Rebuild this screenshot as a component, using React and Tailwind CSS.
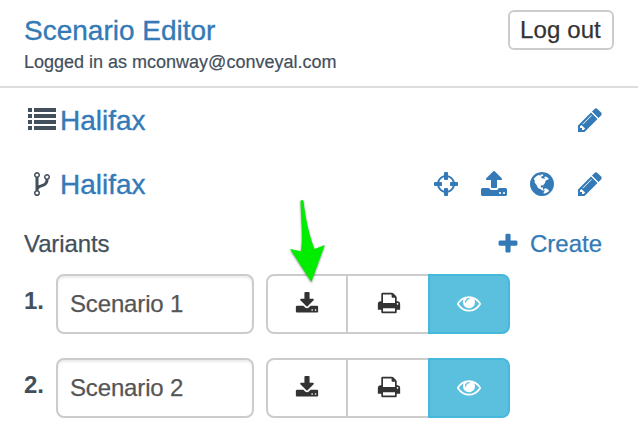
const paths = {
  list: 'M0 128h256v256H0zM384 128h1408v256H384zM0 512h256v256H0zM384 512h1408v256H384zM0 896h256v256H0zM384 896h1408v256H384zM0 1280h256v256H0zM384 1280h1408v256H384z',
  pencil: 'M491 1536l91-91-235-235-91 91v107h128v128h107zm523-928q0-22-22-22-10 0-17 7l-542 542q-7 7-7 17 0 22 22 22 10 0 17-7l542-542q7-7 7-17zm-54-192l416 416-832 832h-416v-416zm683 96q0 53-37 90l-166 166-416-416 166-165q36-38 90-38 53 0 91 38l235 234q37 39 37 91z',
  fork: 'M672 1472q0-40-28-68t-68-28-68 28-28 68 28 68 68 28 68-28 28-68zm0-1152q0-40-28-68t-68-28-68 28-28 68 28 68 68 28 68-28 28-68zm640 128q0-40-28-68t-68-28-68 28-28 68 28 68 68 28 68-28 28-68zm96 0q0 52-26 96.5t-70 69.5q-2 287-226 414-67 38-203 81-128 40-169.5 71t-41.5 100v26q44 25 70 69.5t26 96.5q0 80-56 136t-136 56-136-56-56-136q0-52 26-96.5t70-69.5v-820q-44-25-70-69.5t-26-96.5q0-80 56-136t136-56 136 56 56 136q0 52-26 96.5t-70 69.5v497q54-26 154-57 55-17 87.5-29.5t70.5-31 59-39.5 40.5-51 28-69.5 8.5-91.5q-44-25-70-69.5t-26-96.5q0-80 56-136t136-56 136 56 56 136z',
  crosshairs: 'M1325 1024h-109q-26 0-45-19t-19-45v-128q0-26 19-45t45-19h109q-32-108-112.5-188.5t-188.5-112.5v109q0 26-19 45t-45 19h-128q-26 0-45-19t-19-45v-109q-108 32-188.5 112.5t-112.5 188.5h109q26 0 45 19t19 45v128q0 26-19 45t-45 19h-109q32 108 112.5 188.5t188.5 112.5v-109q0-26 19-45t45-19h128q26 0 45 19t19 45v109q108-32 188.5-112.5t112.5-188.5zm339-192v128q0 26-19 45t-45 19h-143q-37 161-154.5 278.5t-278.5 154.5v143q0 26-19 45t-45 19h-128q-26 0-45-19t-19-45v-143q-161-37-278.5-154.5t-154.5-278.5h-143q-26 0-45-19t-19-45v-128q0-26 19-45t45-19h143q37-161 154.5-278.5t278.5-154.5v-143q0-26 19-45t45-19h128q26 0 45 19t19 45v143q161 37 278.5 154.5t154.5 278.5h143q26 0 45 19t19 45z',
  upload: 'M1344 1472q0-26-19-45t-45-19-45 19-19 45 19 45 45 19 45-19 19-45zm256 0q0-26-19-45t-45-19-45 19-19 45 19 45 45 19 45-19 19-45zm128-224v320q0 40-28 68t-68 28h-1472q-40 0-68-28t-28-68v-320q0-40 28-68t68-28h427q21 56 70.5 92t110.5 36h256q61 0 110.5-36t70.5-92h427q40 0 68 28t28 68zm-325-648q-17 40-59 40h-256v448q0 26-19 45t-45 19h-256q-26 0-45-19t-19-45v-448h-256q-42 0-59-40-17-39 14-69l448-448q18-19 45-19t45 19l448 448q31 30 14 69z',
  globe: 'M896 128q209 0 385.5 103t279.5 279.5 103 385.5-103 385.5-279.5 279.5-385.5 103-385.5-103-279.5-279.5-103-385.5 103-385.5 279.5-279.5 385.5-103zM1150 665L1218 630 1300 600 1340 560 1290 530 1250 480 1170 430 1150 415 1060 425 1045 470 1070 540 1040 590 1000 540 900 520 835 480 850 420 930 395 985 330 975 290 820 290 790 350 700 340 690 300Q500 380 360 570L430 640 420 760 480 880 560 980 600 1090 690 1180 820 1225 900 1300 1015 1330 985 1250 940 1180 970 1120 900 1100 850 1140 810 1080 830 980 900 970 970 1010 1000 930 1090 830 1110 740ZM1020 1220L1110 1170 1250 1215 1358 1337Q1220 1480 1007 1526L1000 1440 1060 1350Z',
  download: 'M1344 1344q0-26-19-45t-45-19-45 19-19 45 19 45 45 19 45-19 19-45zm256 0q0-26-19-45t-45-19-45 19-19 45 19 45 45 19 45-19 19-45zm128-224v320q0 40-28 68t-68 28h-1472q-40 0-68-28t-28-68v-320q0-40 28-68t68-28h465l135 136q58 56 136 56t136-56l136-136h464q40 0 68 28t28 68zm-325-569q17 41-14 70l-448 448q-18 19-45 19t-45-19l-448-448q-31-29-14-70 17-39 59-39h256v-448q0-26 19-45t45-19h256q26 0 45 19t19 45v448h256q42 0 59 39z',
  print: 'M448 1536h896v-256h-896v256zm0-640h896v-384h-160q-40 0-68-28t-28-68v-160h-640v640zm1152 64q0-26-19-45t-45-19-45 19-19 45 19 45 45 19 45-19 19-45zm128 0v416q0 13-9.5 22.5t-22.5 9.5h-224v160q0 40-28 68t-68 28h-960q-40 0-68-28t-28-68v-160h-224q-13 0-22.5-9.5t-9.5-22.5v-416q0-79 56.5-135.5t135.5-56.5h64v-544q0-40 28-68t68-28h672q40 0 88 20t76 48l152 152q28 28 48 76t20 88v256h64q79 0 135.5 56.5t56.5 135.5z',
  eye: 'M1664 960q-152-236-381-353 61 104 61 225 0 185-131.5 316.5t-316.5 131.5-316.5-131.5-131.5-316.5q0-121 61-225-229 117-381 353 133 205 333.5 326.5t434.5 121.5 434.5-121.5 333.5-326.5zm-720-384q0-20-14-34t-34-14q-125 0-214.5 89.5t-89.5 214.5q0 20 14 34t34 14 34-14 14-34q0-86 61-147t147-61q20 0 34-14t14-34zm848 384q0 34-20 69-140 230-376.5 368.5t-499.5 138.5-499.5-139-376.5-368q-20-35-20-69t20-69q140-229 376.5-368t499.5-139 499.5 139 376.5 368q20 35 20 69z',
  plus: 'M1600 736v192q0 40-28 68t-68 28h-416v416q0 40-28 68t-68 28h-192q-40 0-68-28t-28-68v-416h-416q-40 0-68-28t-28-68v-192q0-40 28-68t68-28h416v-416q0-40 28-68t68-28h192q40 0 68 28t28 68v416h416q40 0 68 28t28 68z',
};

function Icon({ name, className }) {
  return (
    <svg viewBox="0 0 1792 1792" fill="currentColor" fillRule={name === 'globe' ? 'evenodd' : 'nonzero'} className={`shrink-0 ${className}`}>
      <path d={paths[name]} />
    </svg>
  );
}

function Variant({ number, name }) {
  return (
    <div className="flex h-[60px]">
      <div className="w-8 pt-[9px] text-2xl leading-9 font-bold">{number}.</div>
      <input
        defaultValue={name}
        className="w-[198px] rounded-lg border-2 border-[#ccc] px-3 text-2xl tracking-[-0.15px] text-[#555] shadow-[inset_0_2px_2px_rgba(0,0,0,0.075)] outline-none [-webkit-text-stroke:0.25px_#555]"
      />
      <div className="ml-3 flex text-[#333]">
        <button className="flex w-[82px] items-center justify-center rounded-l-lg border-2 border-[#ccc] pb-px">
          <Icon name="download" className="size-6" />
        </button>
        <button className="flex w-20 items-center justify-center border-y-2 border-[#ccc] pb-0.5 pl-px">
          <Icon name="print" className="size-6" />
        </button>
        <button className="flex w-[82px] items-center justify-center rounded-r-lg border-2 border-[#46b8da] bg-[#5bc0de] pb-0.5 text-white">
          <Icon name="eye" className="size-6" />
        </button>
      </div>
    </div>
  );
}

export default function App() {
  return (
    <div className="relative h-[444px] w-[638px] overflow-hidden bg-white font-['Liberation_Sans',Arial,sans-serif] text-[#434f5c]">
      <header className="flex h-[88px] justify-between border-b-2 border-[#ddd] pt-[10px] pr-6 pl-6">
        <div>
          <h1 className="pt-px text-[28px] leading-[39px] text-[#337ab7] [-webkit-text-stroke:0.35px_#337ab7]">
            Scenario Editor
          </h1>
          <p className="text-lg leading-6 [-webkit-text-stroke:0.2px_#434f5c]">
            Logged in as mconway@conveyal.com
          </p>
        </div>
        <button className="h-10 w-[106px] rounded-md border-2 border-[#ccc] pr-px text-2xl leading-9 tracking-[0.1px] text-[#333] [-webkit-text-stroke:0.25px_#333]">
          Log out
        </button>
      </header>
      <main className="pr-9 pl-6">
        <div className="flex h-16 items-center text-[28px] text-[#337ab7]">
          <Icon name="list" className="ml-1 size-7 text-[#434f5c]" />
          <span className="ml-1 flex-1 pt-0.5 [-webkit-text-stroke:0.35px_#337ab7]">Halifax</span>
          <Icon name="pencil" className="-mr-0.5 size-7" />
        </div>
        <div className="flex h-16 items-center text-[28px] text-[#337ab7]">
          <Icon name="fork" className="ml-1 size-7 text-[#434f5c]" />
          <span className="ml-1 flex-1 pt-0.5 [-webkit-text-stroke:0.35px_#337ab7]">Halifax</span>
          <div className="-mr-0.5 flex gap-5">
            <Icon name="crosshairs" className="size-7" />
            <Icon name="upload" className="size-7" />
            <Icon name="globe" className="size-7" />
            <Icon name="pencil" className="size-7" />
          </div>
        </div>
        <div className="flex h-[58px] items-center justify-between pb-0.5 text-2xl">
          <span className="tracking-[-0.1px] [-webkit-text-stroke:0.25px_#434f5c]">Variants</span>
          <button className="flex items-center gap-[10px] text-[#337ab7] [-webkit-text-stroke:0.25px_#337ab7]">
            <Icon name="plus" className="size-6" />
            Create
          </button>
        </div>
        <div className="flex flex-col gap-6">
          <Variant number={1} name="Scenario 1" />
          <Variant number={2} name="Scenario 2" />
        </div>
      </main>
      <svg
        viewBox="0 0 44 92"
        className="absolute top-[196px] left-[286px] h-[92px] w-11 drop-shadow-[0_1px_1px_rgba(0,0,0,0.45)]"
      >
        <path
          fill="#00ed00"
          d="M14.5 5Q16 3 17.5 5C19 19 22 36 28.5 53L38.8 49 25.3 86 4 53 15 55.2C17 41 15 24 14.5 5Z"
        />
      </svg>
    </div>
  );
}
